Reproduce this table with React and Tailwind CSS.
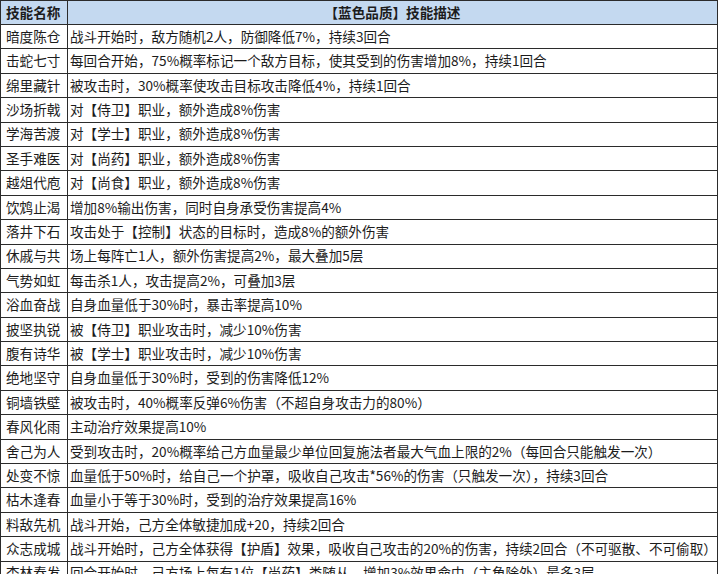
import React from "react";

const skills = [
  ["暗度陈仓", "战斗开始时，敌方随机2人，防御降低7%，持续3回合"],
  ["击蛇七寸", "每回合开始，75%概率标记一个敌方目标，使其受到的伤害增加8%，持续1回合"],
  ["绵里藏针", "被攻击时，30%概率使攻击目标攻击降低4%，持续1回合"],
  ["沙场折戟", "对【侍卫】职业，额外造成8%伤害"],
  ["学海苦渡", "对【学士】职业，额外造成8%伤害"],
  ["圣手难医", "对【尚药】职业，额外造成8%伤害"],
  ["越俎代庖", "对【尚食】职业，额外造成8%伤害"],
  ["饮鸩止渴", "增加8%输出伤害，同时自身承受伤害提高4%"],
  ["落井下石", "攻击处于【控制】状态的目标时，造成8%的额外伤害"],
  ["休戚与共", "场上每阵亡1人，额外伤害提高2%，最大叠加5层"],
  ["气势如虹", "每击杀1人，攻击提高2%，可叠加3层"],
  ["浴血奋战", "自身血量低于30%时，暴击率提高10%"],
  ["披坚执锐", "被【侍卫】职业攻击时，减少10%伤害"],
  ["腹有诗华", "被【学士】职业攻击时，减少10%伤害"],
  ["绝地坚守", "自身血量低于30%时，受到的伤害降低12%"],
  ["铜墙铁壁", "被攻击时，40%概率反弹6%伤害（不超自身攻击力的80%）"],
  ["春风化雨", "主动治疗效果提高10%"],
  ["舍己为人", "受到攻击时，20%概率给己方血量最少单位回复施法者最大气血上限的2%（每回合只能触发一次）"],
  ["处变不惊", "血量低于50%时，给自己一个护罩，吸收自己攻击*56%的伤害（只触发一次），持续3回合"],
  ["枯木逢春", "血量小于等于30%时，受到的治疗效果提高16%"],
  ["料敌先机", "战斗开始，己方全体敏捷加成+20，持续2回合"],
  ["众志成城", "战斗开始时，己方全体获得【护盾】效果，吸收自己攻击的20%的伤害，持续2回合（不可驱散、不可偷取）"],
  ["杏林春发", "回合开始时，己方场上每有1位【尚药】类随从，增加3%效果命中（主角除外）最多3层"],
];

export default function App() {
  return (
    <div className="w-[720px] h-[574px] overflow-hidden bg-white font-['Noto_Sans_CJK_SC','Noto_Sans',sans-serif] text-[13.6px] text-[#1c1c1c]">
      <table className="w-[718px] table-fixed border-collapse">
        <colgroup>
          <col className="w-[67px]" />
          <col />
        </colgroup>
        <thead>
          <tr className="h-[24px] bg-[#c4d9f0]">
            <th className="border border-[#2b2b2b] px-[5px] text-left font-bold leading-none whitespace-nowrap">
              技能名称
            </th>
            <th className="border border-[#2b2b2b] text-center font-bold leading-none">
              【蓝色品质】技能描述
            </th>
          </tr>
        </thead>
        <tbody>
          {skills.map(([name, desc]) => (
            <tr key={name} className="h-[24.4px]">
              <td className="border border-[#2b2b2b] px-[5px] leading-none whitespace-nowrap">
                {name}
              </td>
              <td className="border border-[#2b2b2b] px-[2px] leading-none whitespace-nowrap overflow-hidden">
                {desc}
              </td>
            </tr>
          ))}
        </tbody>
      </table>
    </div>
  );
}
